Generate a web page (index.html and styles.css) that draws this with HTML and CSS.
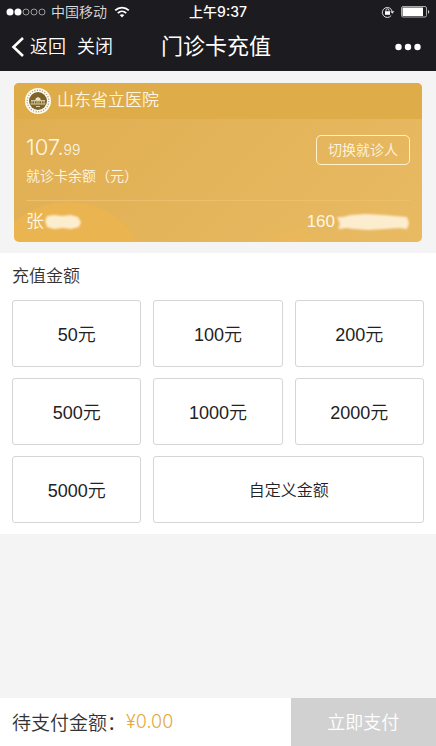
FILE: index.html
```html
<!DOCTYPE html>
<html lang="zh-CN">
<head>
<meta charset="UTF-8">
<meta name="viewport" content="width=device-width, initial-scale=1">
<title>门诊卡充值</title>
<link rel="stylesheet" href="styles.css">
</head>
<body>

<header class="topbar">
  <div class="status">
    <div class="status-left">
      <svg width="40" height="10" viewBox="0 0 40 10" fill="none" stroke="#bbb">
        <circle cx="4" cy="5" r="3.5" fill="#fff" stroke="none"/>
        <circle cx="12" cy="5" r="3.5" fill="#fff" stroke="none"/>
        <circle cx="20" cy="5" r="3" stroke-width=".8"/>
        <circle cx="28" cy="5" r="3" stroke-width=".8"/>
        <circle cx="36" cy="5" r="3" stroke-width=".8"/>
      </svg>
      <span>中国移动</span>
      <svg class="wifi" width="16" height="12" viewBox="0 0 16 12" fill="none" stroke="#fff" stroke-width="1.8">
        <path d="M1.2 4.4C5 .7 11 .7 14.8 4.4M3.8 7.1c2.4-2.2 6-2.2 8.4 0"/>
        <path d="M8 11.4 5.7 9.1c1.3-1.2 3.3-1.2 4.6 0z" fill="#fff" stroke="none"/>
      </svg>
    </div>
    <span class="clock">上午9:37</span>
    <div class="status-right">
      <svg width="14" height="12" viewBox="0 0 14 12" fill="none" stroke="#ddd">
        <path d="M10.2 9.6A5 5 0 1 1 11.2 5.4"/>
        <path d="M9.2 5.2h4.2l-2.1 2.6z" fill="#ddd" stroke="none"/>
        <rect x="4" y="5.2" width="5" height="3.6" fill="#fff" stroke="none"/>
        <path d="M5 5.4V4.3a1.5 1.5 0 0 1 3 0v1.1"/>
      </svg>
      <svg width="29" height="12" viewBox="0 0 29 12">
        <rect x=".5" y=".5" width="25" height="10.5" rx="1.5" fill="none" stroke="#aaa"/>
        <rect x="1.5" y="1.5" width="20.5" height="8.5" fill="#fff"/>
        <path d="M27 4c1.6.4 1.6 3.4 0 3.8z" fill="#ccc"/>
      </svg>
    </div>
  </div>
  <nav class="nav">
    <div class="nav-left">
      <a href="#" class="back">
        <svg width="14" height="20" viewBox="0 0 14 20" fill="none" stroke="#fff" stroke-width="2.6"><path d="M12 1 2.5 10 12 19"/></svg>
        返回</a>
      <a href="#">关闭</a>
    </div>
    <h1>门诊卡充值</h1>
    <button type="button" class="more" aria-label="更多">
      <svg width="26" height="8" viewBox="0 0 26 8" fill="#fff"><circle cx="3.5" cy="4" r="3.2"/><circle cx="13" cy="4" r="3.2"/><circle cx="22.5" cy="4" r="3.2"/></svg>
    </button>
  </nav>
</header>

<main>
  <section class="card">
    <div class="card-head">
      <svg width="26" height="26" viewBox="0 0 26 26">
        <circle cx="13" cy="13" r="13" fill="#fffdf5"/>
        <circle cx="13" cy="13" r="10.8" fill="none" stroke="#b5a67e" stroke-width="1.4" stroke-dasharray="1.2 1.4"/>
        <circle cx="13" cy="13" r="9" fill="#7f6429"/>
        <path d="M6 12.2h4.5v-1.6L13 9l2.5 1.6v1.6H20v1H6z" fill="#eee3c6"/>
        <path d="M5.5 16h15M11 18.5h4" stroke="#ddcfab" stroke-width="1"/>
        <path d="M7 13v3M9.5 13v3M12 12v4M14 12v4M16.5 13v3M19 13v3" stroke="#c9b88c" stroke-width="1"/>
      </svg>
      <span>山东省立医院</span>
    </div>
    <div class="card-body">
      <div>
        <div class="balance">107.<small>99</small></div>
        <div class="balance-label">就诊卡余额（元）</div>
      </div>
      <button type="button" class="switch">切换就诊人</button>
    </div>
    <div class="card-foot">
      <span class="masked name">张<svg width="40" height="20" viewBox="0 0 40 20">
        <g class="smudge">
          <path d="M1 9 3 4l7-1 8 1 9-1 7 2 3 5-2 5-8 2-8-1-9 1-7-2z"/>
        </g>
      </svg></span>
      <span class="masked">160<svg width="75" height="20" viewBox="0 0 75 20">
        <g class="smudge">
          <path d="M2 5h6l8-2 15-1 17 1 12 1 12 1 2 6-2 6-8-1-14 1-17 1-14-1-7-1-9 1 2-5z"/>
        </g>
      </svg></span>
    </div>
  </section>

  <section class="recharge">
    <h2>充值金额</h2>
    <div class="amounts">
      <button type="button">50元</button>
      <button type="button">100元</button>
      <button type="button">200元</button>
      <button type="button">500元</button>
      <button type="button">1000元</button>
      <button type="button">2000元</button>
      <button type="button">5000元</button>
      <button type="button" class="custom">自定义金额</button>
    </div>
  </section>
</main>

<footer class="paybar">
  <div class="total">待支付金额：<span>¥0.00</span></div>
  <button type="button" class="pay" disabled>立即支付</button>
</footer>

</body>
</html>
```
FILE: styles.css
```css
* {
  box-sizing: border-box;
}
body {
  margin: 0;
  min-height: 100vh;
  display: flex;
  flex-direction: column;
  background: #f4f4f4;
  color: #333;
  font-family: "Liberation Sans", "Noto Sans CJK SC", sans-serif;
  font-weight: 350;
}
button {
  font-family: inherit;
  font-weight: inherit;
  margin: 0;
  padding: 0 0 2px;
  border: 0;
  background: none;
}
a {
  color: inherit;
  text-decoration: none;
}
svg {
  display: block;
  flex: none;
}
main {
  flex: 1;
}

/* top bar */
.topbar {
  background: #1c1b20;
  color: #fff;
}
.status,
.nav {
  display: grid;
  grid-template-columns: 1fr auto 1fr;
  align-items: center;
}
.status {
  height: 23px;
  padding: 0 6px;
  font-size: 14px;
  line-height: 24px;
}
.status-left,
.status-right {
  display: flex;
  align-items: center;
  gap: 5px;
}
.status-left {
  color: #ddd;
}
.wifi {
  margin-left: 2px;
}
.status-right {
  justify-content: flex-end;
  gap: 6px;
}
.clock {
  font-family: Inter, "Noto Sans CJK SC", sans-serif;
  font-weight: 500;
}
.nav {
  height: 48px;
  padding: 0 15px 0 11px;
  font-size: 18px;
  line-height: 26px;
}
.nav-left,
.back {
  display: flex;
  align-items: center;
}
.nav-left {
  gap: 11px;
}
.back {
  gap: 5px;
}
.nav h1 {
  margin: 0;
  font-size: 22px;
  font-weight: 400;
  line-height: 30px;
}
.more {
  justify-self: end;
  padding: 0;
}

/* card */
.card {
  margin: 12px 14px 11px;
  border-radius: 5px;
  overflow: hidden;
  color: #fff6e2;
  background:
    radial-gradient(circle at 54px 200px, #eab450 80px, transparent 82px),
    radial-gradient(circle at 280px 190px, #eeb957 20px, transparent 50px),
    linear-gradient(135deg, #e0ae52, #e8ba62);
}
.card-head {
  display: flex;
  align-items: center;
  gap: 6px;
  height: 36px;
  padding: 0 11px;
  background: #deac49;
  font-size: 17px;
  line-height: 26px;
}
.card-body {
  display: flex;
  justify-content: space-between;
  align-items: flex-start;
  height: 82px;
  margin: 0 12px;
  padding-top: 16px;
  border-bottom: 1px solid #ecc06b;
}
.balance {
  font-family: Inter, sans-serif;
  font-size: 22px;
  line-height: 24px;
}
.balance small {
  font-size: 14px;
}
.balance-label {
  margin-top: 4px;
  font-size: 14px;
  line-height: 20px;
}
.switch {
  width: 94px;
  height: 30px;
  border: 1px solid #fff0d0;
  border-radius: 5px;
  color: #fff6e2;
  font-size: 14px;
}
.card-foot {
  display: flex;
  justify-content: space-between;
  height: 41px;
  padding: 0 12px;
}
.masked {
  display: flex;
  align-items: center;
  font-size: 17px;
  line-height: 22px;
}
.name {
  font-size: 18px;
}
.smudge {
  fill: #fdedcf;
  filter: blur(1px);
}

/* amounts */
.recharge {
  padding: 12px 12px 11px;
  background: #fff;
}
.recharge h2 {
  margin: 0 0 11px;
  font-size: 17px;
  font-weight: inherit;
  line-height: 24px;
}
.amounts {
  display: grid;
  grid-template-columns: repeat(3, 1fr);
  grid-auto-rows: 67px;
  gap: 11px 12px;
}
.amounts button {
  border: 1px solid #d5d5d5;
  border-radius: 3px;
  color: #222;
  font-size: 18px;
}
.amounts .custom {
  grid-column: span 2;
  font-size: 16px;
}

/* pay bar */
.paybar {
  display: grid;
  grid-template-columns: 2fr 1fr;
  height: 48px;
  background: #fff;
}
.total {
  display: flex;
  align-items: center;
  padding: 0 0 2px 12px;
  font-size: 19px;
}
.total span {
  color: #e3a93d;
  font-family: Inter, sans-serif;
  font-size: 18px;
}
.pay {
  background: #d1d1d1;
  color: #fff;
  font-size: 18px;
}
```
